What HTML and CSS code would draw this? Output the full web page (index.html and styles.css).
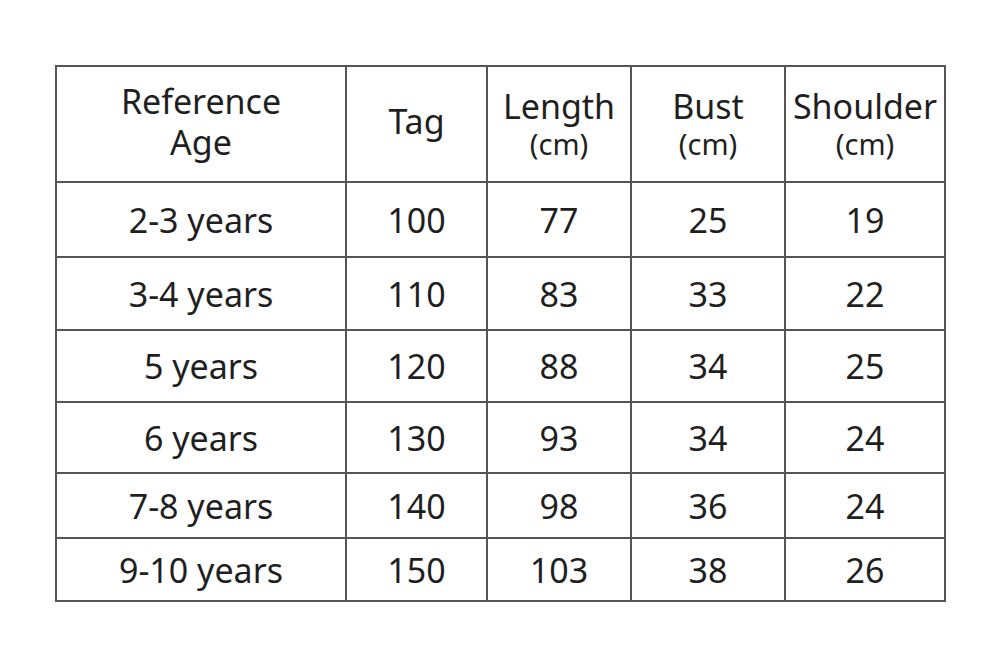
FILE: index.html
```html
<!DOCTYPE html>
<html lang="en">
<head>
<meta charset="utf-8">
<title>Size Chart</title>
<link rel="stylesheet" href="styles.css">
</head>
<body>
<main class="page">
  <table class="chart">
    <colgroup>
      <col class="c1"><col class="c2"><col class="c3"><col class="c4"><col class="c5">
    </colgroup>
    <thead>
      <tr class="head">
        <th><span class="two">Reference<br>Age</span></th>
        <th class="tag">Tag</th>
        <th><span class="main">Length</span><span class="unit">(cm)</span></th>
        <th><span class="main">Bust</span><span class="unit">(cm)</span></th>
        <th><span class="main">Shoulder</span><span class="unit">(cm)</span></th>
      </tr>
    </thead>
    <tbody>
      <tr class="r1"><td>2-3 years</td><td>100</td><td>77</td><td>25</td><td>19</td></tr>
      <tr class="r2"><td>3-4 years</td><td>110</td><td>83</td><td>33</td><td>22</td></tr>
      <tr class="r3"><td>5 years</td><td>120</td><td>88</td><td>34</td><td>25</td></tr>
      <tr class="r4"><td>6 years</td><td>130</td><td>93</td><td>34</td><td>24</td></tr>
      <tr class="r5"><td>7-8 years</td><td>140</td><td>98</td><td>36</td><td>24</td></tr>
      <tr class="r6"><td>9-10 years</td><td>150</td><td>103</td><td>38</td><td>26</td></tr>
    </tbody>
  </table>
</main>
</body>
</html>
```

FILE: styles.css
```css
html, body {
  margin: 0;
  padding: 0;
  background: #ffffff;
}

.page {
  padding: 65px 0 0 55px;
  font-family: "Noto Sans", "Open Sans", sans-serif;
  color: #1f1f1f;
}

.chart {
  border-collapse: collapse;
  table-layout: fixed;
  width: 889px;
}

.c1 { width: 290px; }
.c2 { width: 141px; }
.c3 { width: 144px; }
.c4 { width: 154px; }
.c5 { width: 160px; }

.chart th,
.chart td {
  border: 2px solid #555555;
  padding: 0;
  text-align: center;
  vertical-align: middle;
  font-weight: 400;
  font-size: 34px;
  line-height: 40px;
  white-space: nowrap;
}

.head { height: 116px; }
.r1 { height: 75px; }
.r2 { height: 73px; }
.r3 { height: 72px; }
.r4 { height: 71px; }
.r5 { height: 65px; }
.r6 { height: 63px; }

.chart th.tag {
  padding-bottom: 6px;
}

.two {
  display: block;
  line-height: 41px;
  margin-top: -4px;
}

.main {
  display: block;
  line-height: 34px;
}

.unit {
  display: block;
  padding-top: 6px;
  font-size: 29px;
  line-height: 30px;
}
```
